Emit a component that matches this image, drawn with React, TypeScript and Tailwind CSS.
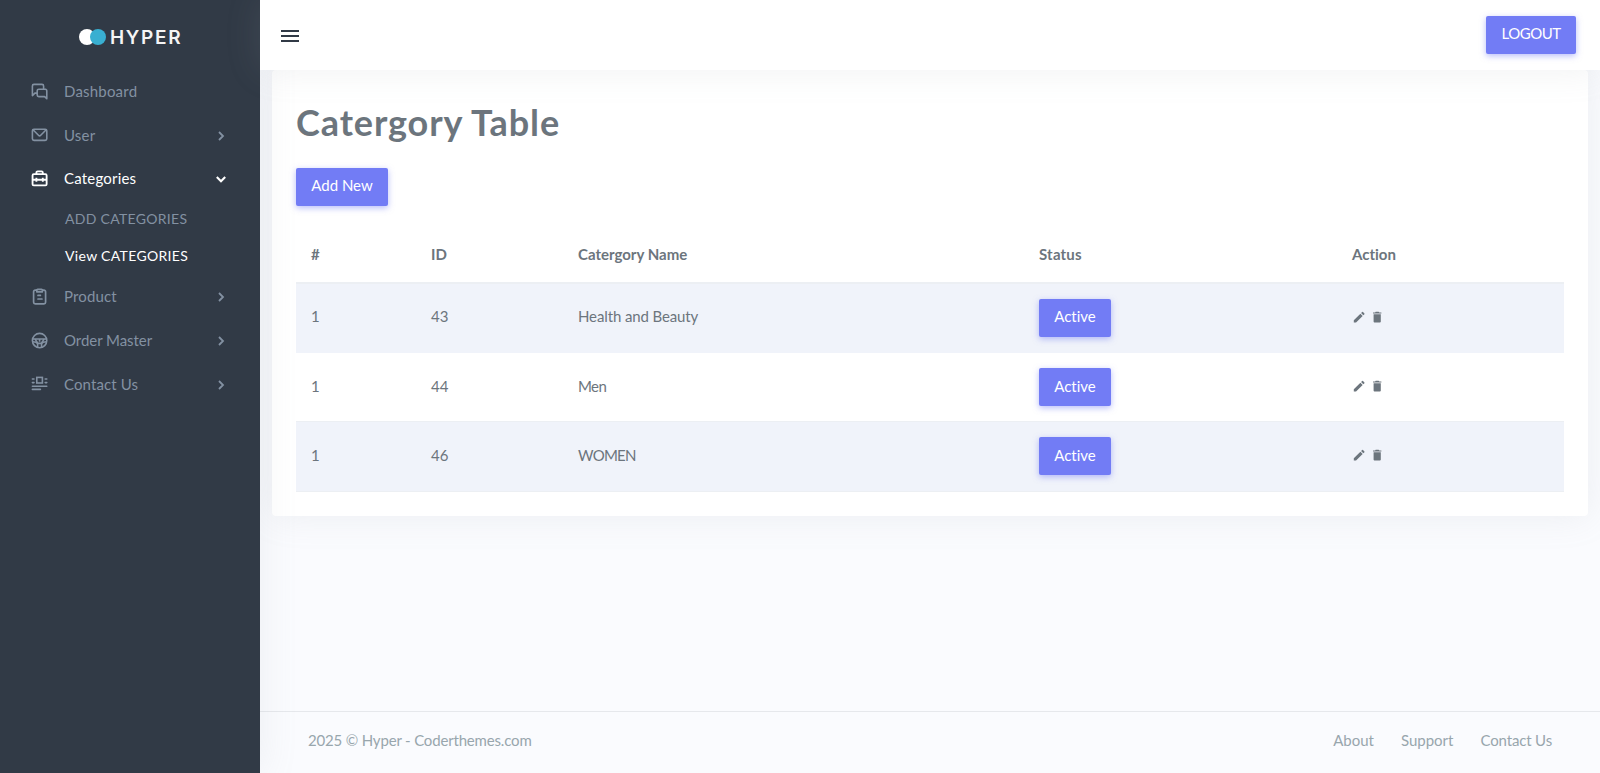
import React from "react";
import { MdDelete, MdEdit, MdMenu } from "react-icons/md";

const shadow = "shadow-[0_0_35px_0_rgba(154,161,171,0.15)]";

type IconProps = { children: React.ReactNode };

function Icon({ children }: IconProps) {
  return (
    <svg viewBox="0 0 24 24" className="mt-[2px] h-[19.2px] w-[19.2px] shrink-0" fill="currentColor">
      {children}
    </svg>
  );
}

const CommentsIcon = () => (
  <Icon>
    <path d="M20,8H18V5a3,3,0,0,0-3-3H5A3,3,0,0,0,2,5V17a1,1,0,0,0,.62.92A.84.84,0,0,0,3,18a1,1,0,0,0,.71-.29l2.81-2.82H8v1.44a3,3,0,0,0,3,3h6.92l2.37,2.38A1,1,0,0,0,21,22a.84.84,0,0,0,.38-.08A1,1,0,0,0,22,21V11A3,3,0,0,0,20,8ZM8,11v1.89H6.11a1,1,0,0,0-.71.29L4,14.59V5A1,1,0,0,1,5,4H15a1,1,0,0,1,1,1V8H11A3,3,0,0,0,8,11Zm12,7.59-1-1a1,1,0,0,0-.71-.3H11a1,1,0,0,1-1-1V11a1,1,0,0,1,1-1h8a1,1,0,0,1,1,1Z" />
  </Icon>
);

const EnvelopeIcon = () => (
  <Icon>
    <path d="M19,3H5A3,3,0,0,0,2,6V16a3,3,0,0,0,3,3H19a3,3,0,0,0,3-3V6A3,3,0,0,0,19,3Zm-.41,2-5.88,5.88a1,1,0,0,1-1.42,0L5.41,5ZM20,16a1,1,0,0,1-1,1H5a1,1,0,0,1-1-1V6.41l5.88,5.88a3,3,0,0,0,4.24,0L20,6.41Z" />
  </Icon>
);

const BriefcaseIcon = () => (
  <Icon>
    <g fill="none" stroke="currentColor" strokeWidth="2.3" strokeLinejoin="round">
      <rect x="3.200" y="6.500" width="17.600" height="14" rx="1.500" />
      <path d="M8 6.500V4.500a1.500 1.500 0 0 1 1.500-1.500h5a1.500 1.500 0 0 1 1.500 1.500v2M3 13.500h18M8 11v5M16 11v5" />
    </g>
  </Icon>
);

const ClipboardIcon = () => (
  <Icon>
    <g fill="none" stroke="currentColor" strokeWidth="2.1" strokeLinejoin="round" strokeLinecap="round">
      <path d="M8 4H6.500a2 2 0 0 0-2 2v13a2 2 0 0 0 2 2h11a2 2 0 0 0 2-2V6a2 2 0 0 0-2-2H16" />
      <path d="M8.500 6V4a1 1 0 0 1 1-1h5a1 1 0 0 1 1 1v2zM10 10.500h3M10 15h5" />
    </g>
  </Icon>
);

const WheelIcon = () => (
  <Icon>
    <g fill="none" stroke="currentColor" strokeWidth="2" strokeLinejoin="round">
      <circle cx="12" cy="12" r="9" />
      <path d="M3.500 10h17M3.500 13.500l4 .5 2 2v4.500M20.500 13.500l-4 .5-2 2v4.500M6.500 10.500l3.500 5h4l3.500-5M12 11v2.500" />
    </g>
  </Icon>
);

const CaptionIcon = () => (
  <Icon>
    <g fill="none" stroke="currentColor" strokeWidth="2" strokeLinecap="round">
      <path d="M3 5h2M3 9.500h2M19 5h2M19 9.500h2M3 14h18M3 18h10" />
      <rect x="8.500" y="3" width="7" height="7" />
    </g>
  </Icon>
);

function Chevron({ down = false }: { down?: boolean }) {
  return (
    <svg
      viewBox="0 0 18 18"
      className="mt-[2px] h-[18px] w-[18px]"
      fill="none"
      stroke="currentColor"
      strokeWidth={down ? 2.1 : 1.8}
    >
      <path d={down ? "M4.800 7l4.200 4.200L13.200 7" : "M7 5l4 4-4 4"} />
    </svg>
  );
}

type NavItemProps = {
  icon: React.ReactNode;
  label: string;
  text?: string;
  state?: "none" | "closed" | "open";
};

function NavItem({ icon, label, text = "", state = "closed" }: NavItemProps) {
  const open = state === "open";
  return (
    <a
      href="#"
      className={`flex items-center pl-[30px] pr-[30px] ${open ? "h-[43px] pb-[3px] text-white" : "h-11 pb-[2px] text-[#8391a2]"}`}
    >
      {icon}
      <span className={`ml-[14.8px] flex-1 text-[15px] leading-5 ${text}`}>{label}</span>
      {state !== "none" && <Chevron down={open} />}
    </a>
  );
}

function Button({ children, className = "" }: { children: React.ReactNode; className?: string }) {
  return (
    <button
      className={`block h-[38px] rounded-[2px] bg-[#727cf5] text-center text-[15px] leading-5 text-white shadow-[0_2px_6px_0_rgba(114,124,245,0.5)] ${className}`}
    >
      {children}
    </button>
  );
}

const rows = [
  { id: 43, name: "Health and Beauty", row: "h-[71px] border-t-2 pb-[2px] bg-[#f0f3fa]", cell: "-mt-1", text: "tracking-[-0.12px]", button: "pb-[3px]" },
  { id: 44, name: "Men", row: "h-[68px] bg-white", cell: "-mt-[3px]", text: "tracking-[-0.6px]", button: "pb-[3px]" },
  { id: 46, name: "WOMEN", row: "h-[71px] border-y pb-[2px] bg-[#f0f3fa]", cell: "-mt-[2px]", text: "tracking-[-0.75px]", button: "pb-px" },
];

const columns = "grid grid-cols-[120px_147px_461px_313px_227px] items-center *:pl-[15px]";

export default function App() {
  return (
    <div className="flex h-[773px] w-full overflow-hidden bg-[#fafbfe] font-['Lato',sans-serif] text-[15px] leading-5 text-[#6c757d] [font-variant-ligatures:none]">
      <aside className={`relative z-10 flex w-[260px] shrink-0 flex-col bg-[#313a46] ${shadow}`}>
        <div className="flex h-[70px] items-center pl-[79px] pt-[3px]">
          <svg viewBox="0 0 27 16" className="h-4 w-[27px]">
            <circle cx="8" cy="8" r="8" fill="#fff" />
            <circle cx="19" cy="8" r="8" fill="#39afd1" />
          </svg>
          <span className="ml-1 mt-[2px] font-['Inter',sans-serif] text-[19px] font-semibold leading-6 tracking-[1.7px] text-[#f5f5f5]">
            HYPER
          </span>
        </div>
        <nav className="flex flex-col">
          <NavItem icon={<CommentsIcon />} label="Dashboard" text="tracking-[0.2px]" state="none" />
          <NavItem icon={<EnvelopeIcon />} label="User" text="tracking-[0.2px]" />
          <NavItem icon={<BriefcaseIcon />} label="Categories" text="tracking-[0.2px]" state="open" />
          <a href="#" className="flex h-[37px] items-center pb-[2px] pl-[65px] text-[14px] tracking-[0.3px] text-[#8391a2]">
            <span>ADD CATEGORIES</span>
          </a>
          <a href="#" className="flex h-[37px] items-center pb-[2px] pl-[65px] text-[14px] tracking-[0.33px] text-white">
            <span>View CATEGORIES</span>
          </a>
          <NavItem icon={<ClipboardIcon />} label="Product" text="tracking-[0.15px]" />
          <NavItem icon={<WheelIcon />} label="Order Master" text="tracking-[-0.05px]" />
          <NavItem icon={<CaptionIcon />} label="Contact Us" text="tracking-[0.1px]" />
        </nav>
      </aside>

      <div className="flex flex-1 flex-col">
        <header
          className={`relative z-20 flex h-[70px] shrink-0 items-center justify-between bg-white pl-[18px] pr-6 ${shadow}`}
        >
          <MdMenu className="mt-[2px] h-6 w-6 text-[#313a46]" />
          <Button className="w-[90px] pb-[5px] tracking-[-0.5px]">LOGOUT</Button>
        </header>

        <main className="flex-1 px-3">
          <section className={`h-[446px] rounded-[4px] bg-white px-6 pt-8 ${shadow}`}>
            <h1 className="text-[36px] font-bold leading-10 tracking-[0.9px]">Catergory Table</h1>
            <Button className="mt-[26px] w-[92px] pb-[5px]">Add New</Button>
            <div className="mt-[22px]">
              <div className={`h-[54px] pb-[2px] font-bold ${columns}`}>
                <span>#</span>
                <span>ID</span>
                <span>Catergory Name</span>
                <span className="tracking-[0.2px]">Status</span>
                <span>Action</span>
              </div>
              {rows.map((r) => (
                <div key={r.id} className={`border-[#eceff3] ${r.row} ${columns}`}>
                  <span className={r.cell}>1</span>
                  <span className={r.cell}>{r.id}</span>
                  <span className={`${r.cell} ${r.text}`}>{r.name}</span>
                  <div>
                    <Button className={`w-[72px] ${r.button}`}>Active</Button>
                  </div>
                  <div className="-mt-px flex gap-1">
                    <MdEdit className="h-[14.4px] w-[14.4px]" />
                    <MdDelete className="h-[14.4px] w-[14.4px]" />
                  </div>
                </div>
              ))}
            </div>
          </section>
        </main>

        <footer className="flex h-[62px] shrink-0 items-center justify-between border-t border-[#e6e8ec] px-12 pb-[5px] text-[#98a6ad]">
          <span className="tracking-[-0.17px]">2025 © Hyper - Coderthemes.com</span>
          <div className="flex gap-[27px]">
            <a href="#">About</a>
            <a href="#">Support</a>
            <a href="#" className="tracking-[-0.15px]">Contact Us</a>
          </div>
        </footer>
      </div>
    </div>
  );
}
